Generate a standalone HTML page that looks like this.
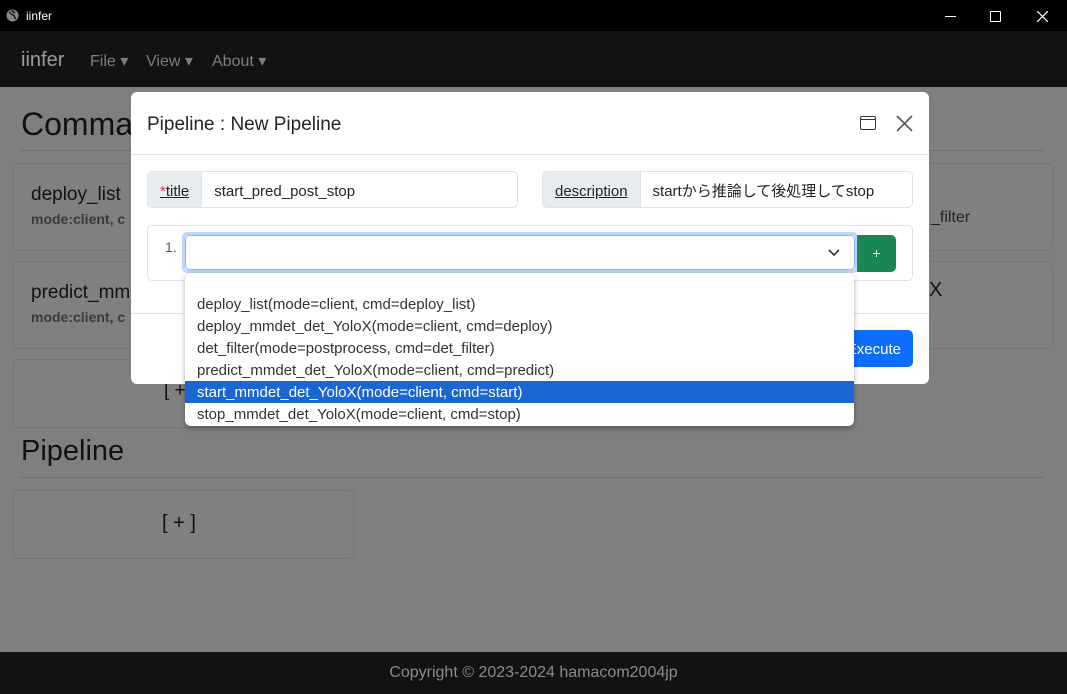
<!DOCTYPE html>
<html><head><meta charset="utf-8"><style>
*{box-sizing:border-box;margin:0;padding:0}
body{width:1067px;height:694px;overflow:hidden;position:relative;font-family:"Liberation Sans","Noto Sans CJK JP",sans-serif;background:#7f7f7f;color:#212529}
.abs{position:absolute}
.tb{left:0;top:0;width:1067px;height:31px;background:#000;color:#fff;font-size:12px}
.nav{left:0;top:31px;width:1067px;height:56px;background:#101214;color:#7d7e80;font-size:16px}
.card{position:absolute;border:1px solid #747474;border-radius:5px;background:#808080}
.foot{left:0;top:652px;width:1067px;height:42px;background:#101214;color:#8a8b8c;font-size:16px;text-align:center;line-height:42px}
.modal{left:131px;top:92px;width:798px;height:292px;background:#fff;border-radius:6px}
.grp{position:absolute;height:37px;border:1px solid #dee2e6;border-radius:5px;display:flex;font-size:15px;overflow:hidden}
.grp .l{background:#e9ecef;border-right:1px solid #dee2e6;padding:2px 12px 0;line-height:35px;text-decoration:underline}
.grp .v{padding:2px 12px 0;line-height:35px}
.dd{left:185px;top:273px;width:669px;height:153px;background:#fff;border-radius:6px;box-shadow:0 2px 6px rgba(0,0,0,.3);font-size:15px;color:#333}
.dd div{height:22px;line-height:24px;padding-left:12px}
</style></head><body>
<div class="abs tb"><svg class="abs" style="left:6px;top:9px" width="13" height="13" viewBox="0 0 13 13"><circle cx="6.5" cy="6.5" r="6" fill="#888"/><path d="M3 3c2 1 2 3 4 3s1 3 3 4M6 1c0 2 2 2 3 3" stroke="#000" stroke-width="1.2" fill="none"/></svg><span class="abs" style="left:26px;top:9px">iinfer</span>
<div class="abs" style="left:945px;top:16px;width:11px;height:1px;background:#fff"></div>
<div class="abs" style="left:990px;top:11px;width:11px;height:11px;border:1px solid #fff;border-radius:1px"></div>
<svg class="abs" style="left:1037px;top:11px" width="11" height="11" viewBox="0 0 11 11"><path d="M0 0L11 11M11 0L0 11" stroke="#fff" stroke-width="1.2"/></svg></div>
<div class="abs nav"><span class="abs" style="left:21px;top:18px;font-size:20px;color:#9a9b9c">iinfer</span>
<span class="abs" style="left:90px;top:20px">File ▾</span><span class="abs" style="left:146px;top:20px">View ▾</span><span class="abs" style="left:212px;top:20px">About ▾</span></div>
<div class="abs" style="left:21px;top:106px;font-size:32px;color:#111">Comma</div>
<div class="abs" style="left:21px;top:150px;width:1023px;height:1px;background:#6e6e6e"></div>
<div class="card" style="left:13px;top:163px;width:340px;height:88px"><div class="abs" style="left:17px;top:20px;font-size:19px;color:#111">deploy_list</div><div class="abs" style="left:17px;top:47px;font-size:14px;color:#3a3a3a;font-weight:bold">mode:client, c</div></div>
<div class="card" style="left:13px;top:261px;width:340px;height:88px"><div class="abs" style="left:17px;top:20px;font-size:19px;color:#111">predict_mm</div><div class="abs" style="left:17px;top:47px;font-size:14px;color:#3a3a3a;font-weight:bold">mode:client, c</div></div>
<div class="card" style="left:13px;top:359px;width:340px;height:69px"><div class="abs" style="left:150px;top:20px;font-size:19px;color:#111">[ +</div></div>
<div class="card" style="left:700px;top:163px;width:353px;height:88px"><div class="abs" style="left:230px;top:45px;font-size:16px;color:#222">_filter</div></div>
<div class="card" style="left:700px;top:261px;width:353px;height:88px"><div class="abs" style="left:228px;top:17px;font-size:20px;color:#111">X</div></div>
<div class="abs" style="left:21px;top:435px;font-size:29px;color:#111">Pipeline</div>
<div class="abs" style="left:21px;top:477px;width:1023px;height:1px;background:#6e6e6e"></div>
<div class="card" style="left:13px;top:490px;width:341px;height:69px"><div class="abs" style="left:148px;top:21px;font-size:20px;color:#111">[ + ]</div></div>
<div class="abs foot">Copyright © 2023-2024 hamacom2004jp</div>
<div class="abs modal">
<div class="abs" style="left:16px;top:22px;font-size:19px;color:#212529">Pipeline : New Pipeline</div>
<svg class="abs" style="left:729px;top:24px" width="16" height="14" viewBox="0 0 16 14"><rect x="0.5" y="0.5" width="15" height="13" rx="1.5" fill="none" stroke="#333"/><line x1="0.5" y1="3.5" x2="15.5" y2="3.5" stroke="#333"/></svg>
<svg class="abs" style="left:765px;top:23px" width="17" height="17" viewBox="0 0 17 17"><path d="M1 1L16 16M16 1L1 16" stroke="#555" stroke-width="1.6"/></svg>
<div class="abs" style="left:0;top:62px;width:798px;height:1px;background:#dee2e6"></div>
<div class="grp" style="left:16px;top:79px;width:371px"><span class="l"><span style="color:#dc3545">*</span>title</span><span class="v">start_pred_post_stop</span></div>
<div class="grp" style="left:411px;top:79px;width:371px"><span class="l">description</span><span class="v">startから推論して後処理してstop</span></div>
<div class="abs" style="left:16px;top:133px;width:766px;height:56px;border:1px solid #dee2e6;border-radius:5px"></div>
<div class="abs" style="left:34px;top:147px;font-size:14px;color:#555">1.</div>
<div class="abs" style="left:51px;top:140px;width:676px;height:41px;border:3px solid #bcd6fb;border-radius:5px"><div style="height:100%;border:1px solid #86b7fe;border-radius:4px;background:#fff"></div></div>
<svg class="abs" style="left:697px;top:157px" width="12" height="8" viewBox="0 0 12 8"><path d="M1 1l5 5 5-5" stroke="#333" stroke-width="1.6" fill="none"/></svg>
<div class="abs" style="left:726px;top:143px;width:39px;height:37px;background:#198754;border-radius:0 5px 5px 0;color:#fff;text-align:center;line-height:37px;font-size:14px">+</div>
<div class="abs" style="left:0;top:221px;width:798px;height:1px;background:#dee2e6"></div>
<div class="abs" style="left:700px;top:238px;width:82px;height:37px;background:#0d6efd;border-radius:5px;color:#fff;font-size:15px;line-height:39px;text-align:right;padding-right:12px">Execute</div>
</div>
<div class="abs dd"><div style="height:20px"></div>
<div>deploy_list(mode=client, cmd=deploy_list)</div>
<div>deploy_mmdet_det_YoloX(mode=client, cmd=deploy)</div>
<div>det_filter(mode=postprocess, cmd=det_filter)</div>
<div>predict_mmdet_det_YoloX(mode=client, cmd=predict)</div>
<div style="background:#1a66d2;color:#fff">start_mmdet_det_YoloX(mode=client, cmd=start)</div>
<div>stop_mmdet_det_YoloX(mode=client, cmd=stop)</div>
</div>
</body></html>
